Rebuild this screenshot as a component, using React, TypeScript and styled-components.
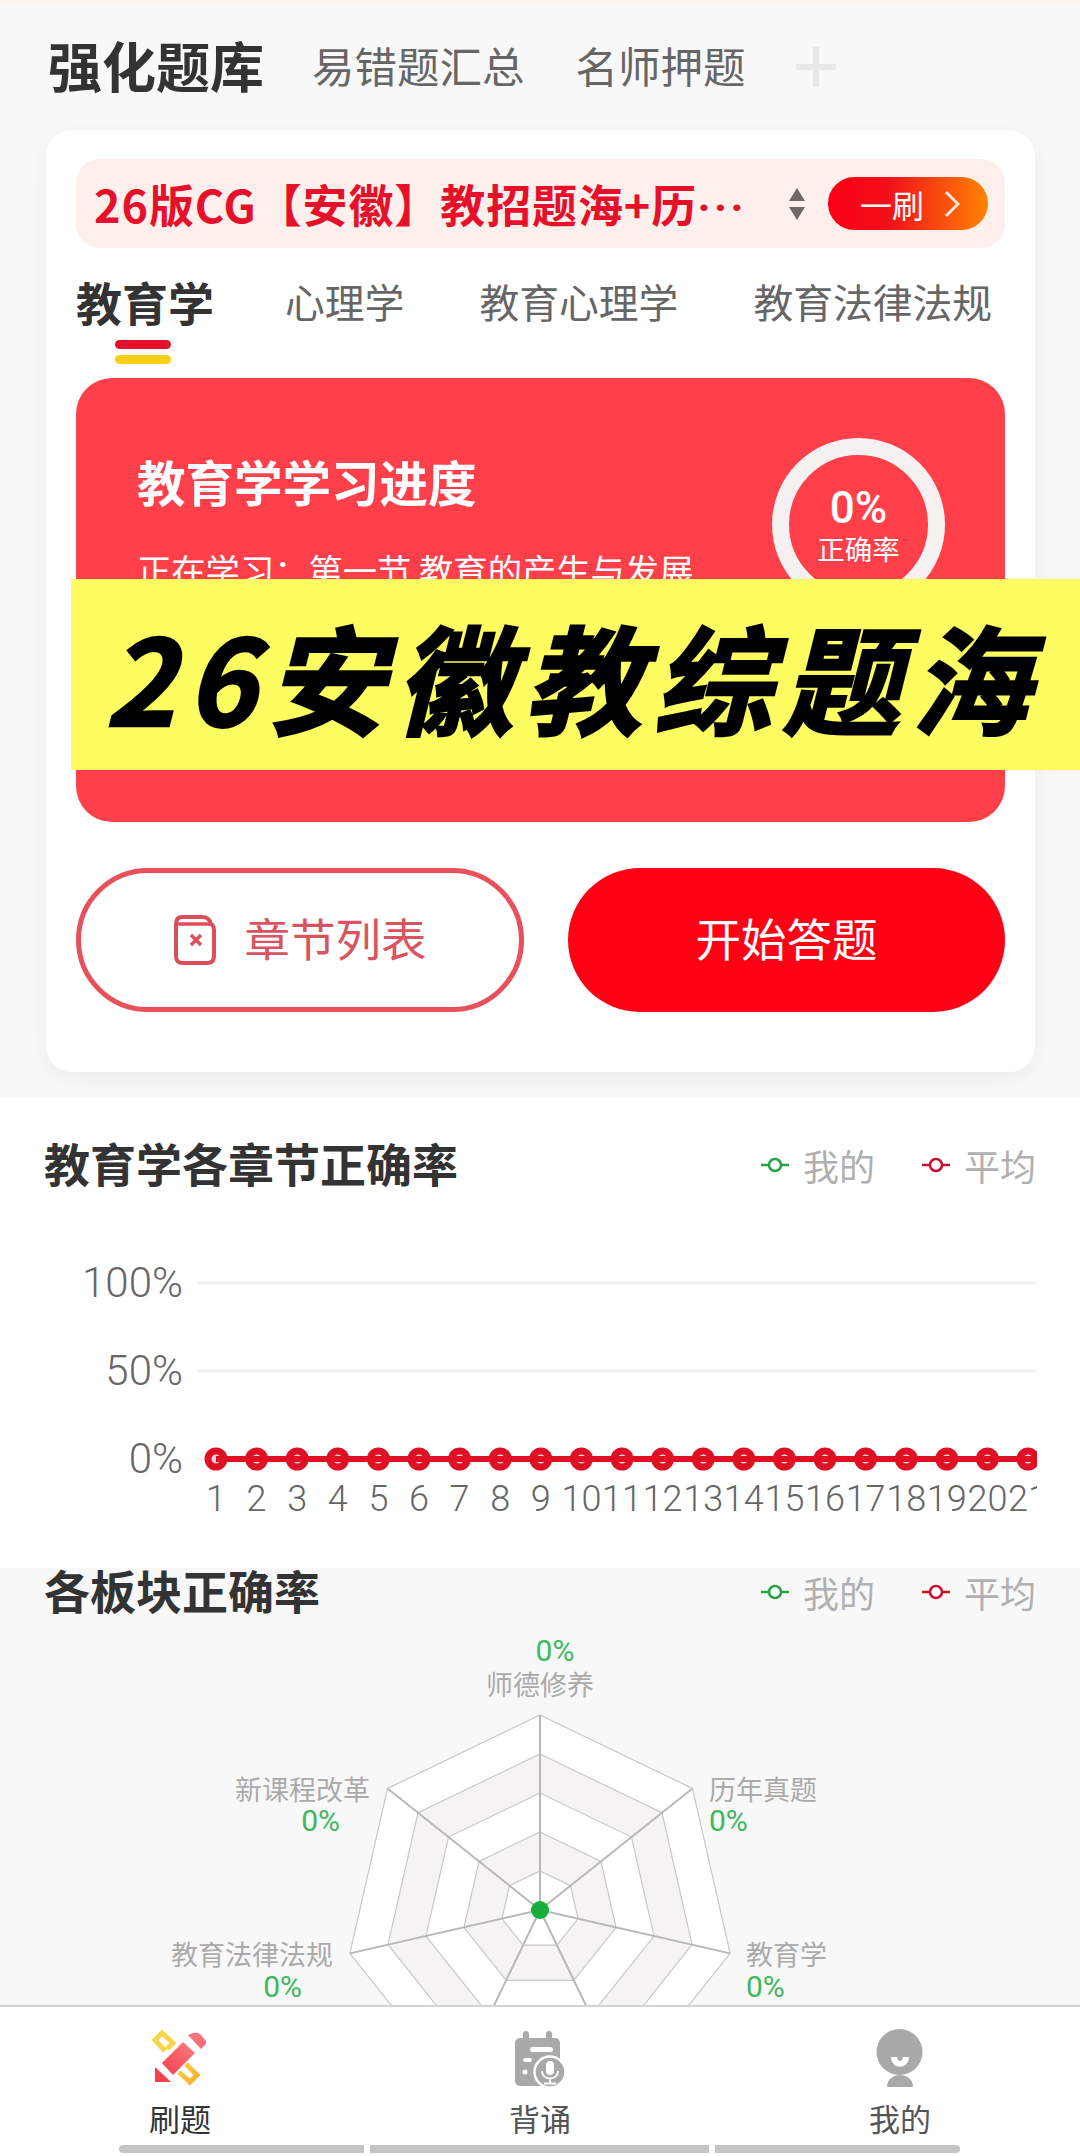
import React from 'react';
import styled, { createGlobalStyle } from 'styled-components';

const CJK = '"Noto Sans CJK SC", "Noto Sans", sans-serif';
const NUM = 'Roboto, "Noto Sans CJK SC", sans-serif';

const GlobalStyle = createGlobalStyle`
  html, body { margin: 0; padding: 0; background: #f8f8f8; }
  body { font-family: ${CJK}; }
  * { box-sizing: border-box; }
`;

const Page = styled.div`
  position: relative;
  width: 1080px;
  height: 2156px;
  display: flex;
  flex-direction: column;
  overflow: hidden;
  background: #f8f8f8;
`;
const Main = styled.div`
  flex: 1;
  min-height: 0;
  overflow: hidden;
`;
const TopSection = styled.section`
  height: 1098px;
  padding: 0 45px 0 46px;
  border-top: 3px solid #fff3ee;
`;
const Header = styled.div`
  height: 127px;
  display: flex;
  align-items: center;
  padding: 0 0 4px 2px;
  gap: 51px;
`;
const HeaderActive = styled.div`
  font-size: 54px;
  font-weight: 700;
  color: #333;
  margin-right: -3px;
`;
const HeaderItem = styled.div`
  font-size: 42.5px;
  color: #666;
`;
const PlusIcon = styled.svg`
  width: 42px;
  height: 42px;
  display: block;
  margin-left: -2px;
  margin-top: 4px;
`;
const Card = styled.div`
  height: 942px;
  background: #fff;
  border-radius: 26px;
  box-shadow: 0 6px 26px rgba(0, 0, 0, 0.05);
  padding: 29px 30px 0;
`;
const BookBar = styled.div`
  height: 89px;
  background: #fdf0ec;
  border-radius: 24px;
  display: flex;
  align-items: center;
  padding: 0 17px 0 18px;
`;
const BookName = styled.div`
  flex: 1;
  min-width: 0;
  overflow: hidden;
  font-size: 45px;
  font-weight: 700;
  letter-spacing: 0.9px;
  color: #e6102a;
  white-space: nowrap;
`;
const BookDots = styled.span`
  font-family: ${NUM};
  font-weight: 700;
  letter-spacing: 3px;
`;
const SortIcon = styled.svg`
  width: 20px;
  height: 34px;
  display: block;
  margin-right: 21px;
  flex: none;
`;
const RoundPill = styled.div`
  flex: none;
  width: 160px;
  height: 53px;
  border-radius: 27px;
  background: linear-gradient(90deg, #fb0016 0%, #f2101a 38%, #ff8400 100%);
  color: #fff;
  display: flex;
  align-items: center;
  justify-content: center;
  gap: 20px;
  font-size: 32px;
  padding-left: 4px;
`;
const PillArrow = styled.svg`
  width: 16px;
  height: 28px;
  display: block;
`;
const SubjectTabs = styled.div`
  display: flex;
  gap: 75px;
  height: 130px;
  padding-top: 22px;
  white-space: nowrap;
  align-items: flex-start;
`;
const SubjectTab = styled.div<{ $active?: boolean }>`
  position: relative;
  font-size: ${(p) => (p.$active ? '46px' : '39.8px')};
  font-weight: ${(p) => (p.$active ? 700 : 400)};
  color: ${(p) => (p.$active ? '#333' : '#666')};
  line-height: 62px;
  margin-right: ${(p) => (p.$active ? '-4px' : '0')};
  ${(p) =>
    p.$active &&
    `
    &::before, &::after {
      content: '';
      position: absolute;
      left: 39px;
      width: 56px;
      height: 9px;
      border-radius: 5px;
    }
    &::before { top: 70px; background: #e3122a; }
    &::after { top: 85px; background: #f7cf14; }
  `}
`;
const ProgressCard = styled.div`
  height: 444px;
  background: #ff404b;
  border-radius: 36px;
  display: flex;
  justify-content: space-between;
  padding: 60px 60px 0 61px;
  color: #fff;
  overflow: hidden;
`;
const ProgressTitle = styled.div`
  font-size: 48.5px;
  font-weight: 700;
  line-height: 70px;
  margin-top: 8px;
`;
const ProgressSub = styled.div`
  font-size: 34.3px;
  line-height: 50px;
  margin-top: 28px;
  white-space: nowrap;
`;
const Ring = styled.div`
  width: 173px;
  height: 173px;
  border: 17px solid #f4f1f0;
  border-radius: 50%;
  display: flex;
  flex-direction: column;
  align-items: center;
  justify-content: center;
`;
const RingValue = styled.div`
  font-family: ${NUM};
  font-size: 44px;
  font-weight: 500;
  line-height: 46px;
`;
const RingLabel = styled.div`
  font-size: 27.5px;
  line-height: 34px;
`;
const Actions = styled.div`
  display: flex;
  justify-content: space-between;
  margin-top: 46px;
`;
const OutlineButton = styled.div`
  width: 448px;
  height: 144px;
  border: 5px solid #e8505b;
  border-radius: 72px;
  display: flex;
  align-items: center;
  justify-content: center;
  gap: 27px;
  font-size: 45.5px;
  color: #d9545e;
  padding-bottom: 6px;
`;
const SolidButton = styled.div`
  width: 437px;
  height: 144px;
  background: #ff0015;
  border-radius: 72px;
  display: flex;
  align-items: center;
  justify-content: center;
  font-size: 45.5px;
  color: #fff;
  padding-bottom: 6px;
`;
const DocIcon = styled.svg`
  width: 44px;
  height: 52px;
  display: block;
  margin-top: 6px;
`;
const Banner = styled.div`
  position: absolute;
  left: 71px;
  right: 0;
  top: 579px;
  height: 191px;
  background: #fdfc60;
  display: flex;
  align-items: center;
  padding-left: 34px;
  font-size: 118px;
  font-weight: 700;
  font-style: italic;
  letter-spacing: 11px;
  color: #000;
  -webkit-text-stroke: 2.5px #000;
  white-space: nowrap;
`;
const ChartSection = styled.section<{ $tinted?: boolean }>`
  height: ${(p) => (p.$tinted ? '440px' : '470px')};
  background: ${(p) => (p.$tinted ? '#f8f8f8' : '#fff')};
  overflow: ${(p) => (p.$tinted ? 'visible' : 'hidden')};
`;
const SectionHead = styled.div<{ $height: number }>`
  height: ${(p) => p.$height}px;
  display: flex;
  align-items: center;
  justify-content: space-between;
  padding: 0 44px;
`;
const HeadGap = styled.div`
  height: 6px;
`;
const SectionTitle = styled.h2`
  margin: 0;
  font-size: 46px;
  font-weight: 700;
  color: #333;
`;
const Legend = styled.div`
  display: flex;
  gap: 47px;
  padding-top: 6px;
`;
const LegendItem = styled.div`
  display: flex;
  align-items: center;
  gap: 14px;
  font-size: 36px;
  color: #b0b0b0;
`;
const LegendMark = styled.svg`
  width: 28px;
  height: 20px;
  display: block;
`;
const LineChart = styled.svg`
  display: block;
  width: 1080px;
  height: 330px;
  font-family: ${NUM};
  font-weight: 300;
`;
const Radar = styled.svg`
  display: block;
  width: 1080px;
  height: 500px;
  margin-top: -1px;
  font-family: ${CJK};
`;
const TabBar = styled.nav`
  flex: none;
  height: 151px;
  background: #fff;
  border-top: 2px solid #d4d4d4;
  display: flex;
  flex-direction: column;
`;
const TabRow = styled.div`
  flex: 1;
  display: grid;
  grid-template-columns: repeat(3, 360px);
`;
const TabItem = styled.div<{ $active?: boolean }>`
  display: flex;
  flex-direction: column;
  align-items: center;
  padding-top: 21px;
  font-size: 31px;
  line-height: 44px;
  color: ${(p) => (p.$active ? '#333' : '#555')};
`;
const TabIcon = styled.svg`
  width: 60px;
  height: 60px;
  display: block;
  margin-bottom: 8px;
`;
const GestureRow = styled.div`
  display: flex;
  gap: 6px;
  padding: 0 120px 3px 119px;
`;
const GestureBar = styled.div<{ $grow: number; $pos: 'start' | 'mid' | 'end' }>`
  flex: ${(p) => p.$grow};
  height: 8px;
  background: #c4c4c4;
  border-radius: ${(p) => (p.$pos === 'start' ? '4px 0 0 4px' : p.$pos === 'end' ? '0 4px 4px 0' : '0')};
`;

const chartPoints = Array.from({ length: 21 }, (_, i) => i + 1);
const pointX = (i: number) => 216 + i * 40.6;

const radarCenter = { x: 540, y: 295 };
const radarVertex = (i: number, r: number) => {
  const a = (i * 2 * Math.PI) / 7;
  return [radarCenter.x + r * Math.sin(a), radarCenter.y - r * Math.cos(a)];
};
const ringPoints = (r: number) =>
  Array.from({ length: 7 }, (_, i) => radarVertex(i, r).join(',')).join(' ');

const LegendBlock = () => (
  <Legend>
    <LegendItem>
      <LegendMark viewBox="0 0 28 20">
        <path d="M0 10H28" stroke="#25a244" strokeWidth="2.5" />
        <circle cx="14" cy="10" r="6" fill="#fff" stroke="#25a244" strokeWidth="2.5" />
      </LegendMark>
      我的
    </LegendItem>
    <LegendItem>
      <LegendMark viewBox="0 0 28 20">
        <path d="M0 10H28" stroke="#c8102e" strokeWidth="2.5" />
        <circle cx="14" cy="10" r="6" fill="#fff" stroke="#c8102e" strokeWidth="2.5" />
      </LegendMark>
      平均
    </LegendItem>
  </Legend>
);

const App = () => {
  return (
    <Page>
      <GlobalStyle />
      <Main>
        <TopSection>
          <Header>
            <HeaderActive>强化题库</HeaderActive>
            <HeaderItem>易错题汇总</HeaderItem>
            <HeaderItem>名师押题</HeaderItem>
            <PlusIcon viewBox="0 0 42 42">
              <path d="M21 1V41M1 21H41" stroke="#e8e8e8" strokeWidth="6" />
            </PlusIcon>
          </Header>
          <Card>
            <BookBar>
              <BookName>
                26版CG【安徽】教招题海+历<BookDots>···</BookDots>
              </BookName>
              <SortIcon viewBox="0 0 20 34">
                <path d="M10 1L18 14H2Z M10 33L2 20H18Z" fill="#6e6a66" />
              </SortIcon>
              <RoundPill>
                一刷
                <PillArrow viewBox="0 0 16 28">
                  <path d="M2 2L14 14L2 26" fill="none" stroke="#ffe6d6" strokeWidth="3" />
                </PillArrow>
              </RoundPill>
            </BookBar>
            <SubjectTabs>
              <SubjectTab $active>教育学</SubjectTab>
              <SubjectTab>心理学</SubjectTab>
              <SubjectTab>教育心理学</SubjectTab>
              <SubjectTab>教育法律法规</SubjectTab>
            </SubjectTabs>
            <ProgressCard>
              <div>
                <ProgressTitle>教育学学习进度</ProgressTitle>
                <ProgressSub>正在学习：第一节 教育的产生与发展</ProgressSub>
              </div>
              <Ring>
                <RingValue>0%</RingValue>
                <RingLabel>正确率</RingLabel>
              </Ring>
            </ProgressCard>
            <Actions>
              <OutlineButton>
                <DocIcon viewBox="0 0 44 52">
                  <path
                    d="M3 10C3 5 5 3 9 3H29C34 3 37 6 38 10C40 11 41 13 41 16V42C41 47 38 49 34 49H10C5 49 3 47 3 42Z"
                    fill="none"
                    stroke="#dc4f5a"
                    strokeWidth="4"
                  />
                  <path d="M3 10H38" stroke="#dc4f5a" strokeWidth="3.5" />
                  <path d="M18 21L28 31M28 21L18 31" stroke="#dc4f5a" strokeWidth="3.5" />
                </DocIcon>
                章节列表
              </OutlineButton>
              <SolidButton>开始答题</SolidButton>
            </Actions>
          </Card>
        </TopSection>

        <ChartSection>
          <SectionHead $height={128}>
            <SectionTitle>教育学各章节正确率</SectionTitle>
            <LegendBlock />
          </SectionHead>
          <HeadGap />
          <LineChart viewBox="0 0 1080 330">
            <defs>
              <clipPath id="plot-clip">
                <rect x="190" y="0" width="847" height="330" />
              </clipPath>
            </defs>
            {[
              ['100%', 51],
              ['50%', 139],
              ['0%', 227],
            ].map(([label, y]) => (
              <g key={label}>
                <line x1="197" x2="1037" y1={y} y2={y} stroke="#f0f0f0" strokeWidth="3" />
                <text x="183" y={Number(y) + 14} textAnchor="end" fontSize="42" fill="#666">
                  {label}
                </text>
              </g>
            ))}
            <g clipPath="url(#plot-clip)">
              {chartPoints.map((n, i) => (
                <g key={n}>
                  <circle cx={pointX(i)} cy="227" r="8" fill="#f7d5d8" stroke="#e01024" strokeWidth="7" />
                  <text x={pointX(i)} y="279" textAnchor="middle" fontSize="36" fill="#666">
                    {n}
                  </text>
                </g>
              ))}
              <line x1="216" x2="1040" y1="227" y2="227" stroke="#e01024" strokeWidth="6" />
            </g>
          </LineChart>
        </ChartSection>

        <ChartSection $tinted>
          <SectionHead $height={42}>
            <SectionTitle>各板块正确率</SectionTitle>
            <LegendBlock />
          </SectionHead>
          <HeadGap />
          <Radar viewBox="0 0 1080 500">
            {[195, 156, 117, 78, 39].map((r, i) => (
              <polygon
                key={r}
                points={ringPoints(r)}
                fill={i % 2 === 0 ? '#fff' : '#f5f4f2'}
                stroke="#c8c8c8"
                strokeWidth="1.2"
              />
            ))}
            {Array.from({ length: 7 }, (_, i) => {
              const [x, y] = radarVertex(i, 195);
              return (
                <line key={i} x1={radarCenter.x} y1={radarCenter.y} x2={x} y2={y} stroke="#b8b8b8" strokeWidth="2" />
              );
            })}
            <circle cx={radarCenter.x} cy={radarCenter.y} r="9" fill="#16ae3c" />
            <text x="555" y="46" textAnchor="middle" fontSize="30" fill="#3db85c" fontFamily={NUM}>0%</text>
            <text x="540" y="80" textAnchor="middle" fontSize="27" fill="#aaa">师德修养</text>
            <text x="709" y="185" fontSize="27" fill="#aaa">历年真题</text>
            <text x="709" y="216" fontSize="30" fill="#3db85c" fontFamily={NUM}>0%</text>
            <text x="370" y="185" textAnchor="end" fontSize="27" fill="#aaa">新课程改革</text>
            <text x="340" y="216" textAnchor="end" fontSize="30" fill="#3db85c" fontFamily={NUM}>0%</text>
            <text x="746" y="350" fontSize="27" fill="#aaa">教育学</text>
            <text x="746" y="382" fontSize="30" fill="#3db85c" fontFamily={NUM}>0%</text>
            <text x="333" y="350" textAnchor="end" fontSize="27" fill="#aaa">教育法律法规</text>
            <text x="302" y="382" textAnchor="end" fontSize="30" fill="#3db85c" fontFamily={NUM}>0%</text>
          </Radar>
        </ChartSection>
      </Main>

      <TabBar>
        <TabRow>
          <TabItem $active>
            <TabIcon viewBox="0 0 60 60">
              <defs>
                <linearGradient id="pencil-red" x1="0" y1="1" x2="1" y2="0">
                  <stop offset="0" stopColor="#f5404c" />
                  <stop offset="1" stopColor="#fb7d86" />
                </linearGradient>
                <linearGradient id="pencil-yellow" x1="0" y1="0" x2="1" y2="1">
                  <stop offset="0" stopColor="#f9d648" />
                  <stop offset="1" stopColor="#f6ad2c" />
                </linearGradient>
              </defs>
              <path d="M5 39L21 54H5Z" fill="#f5404c" />
              <path d="M33 14L45 25L23 47L12 35Z" fill="url(#pencil-red)" />
              <path d="M38 7L43 5Q47 4 50 6L56 13Q57 15 55 17L51 21Z" fill="#f4737d" />
              <path d="M15 23L5 12L12 5L23 15L17 21" fill="none" stroke="#f9d648" strokeWidth="5" />
              <path d="M36 36L47 47L40 54L29 44" fill="none" stroke="url(#pencil-yellow)" strokeWidth="5" />
            </TabIcon>
            刷题
          </TabItem>
          <TabItem>
            <TabIcon viewBox="0 0 60 60">
              <rect x="5" y="10" width="45" height="48" rx="5" fill="#a9a9a9" />
              <rect x="13" y="3" width="6" height="14" rx="3" fill="#a9a9a9" />
              <rect x="36" y="3" width="6" height="14" rx="3" fill="#a9a9a9" />
              <rect x="20" y="19" width="23" height="5" rx="2.5" fill="#fff" />
              <rect x="13" y="30" width="9" height="4" rx="2" fill="#fff" />
              <circle cx="15" cy="44" r="2.5" fill="#fff" />
              <circle cx="40" cy="44" r="15.5" fill="#a9a9a9" stroke="#fff" strokeWidth="2.5" />
              <rect x="36" y="33" width="8" height="14" rx="4" fill="#fff" />
              <path d="M32 43C32 53 48 53 48 43M40 50V55M34 55.5H46" fill="none" stroke="#fff" strokeWidth="1.8" />
            </TabIcon>
            背诵
          </TabItem>
          <TabItem>
            <TabIcon viewBox="0 0 60 60">
              <circle cx="29.5" cy="24" r="23" fill="#a9a9a9" />
              <path d="M24 29C24 38 36 38 36 29" fill="none" stroke="#fff" strokeWidth="6" />
              <path d="M17 59C17 43 43 43 43 59Z" fill="#a9a9a9" />
            </TabIcon>
            我的
          </TabItem>
        </TabRow>
        <GestureRow>
          <GestureBar $grow={245} $pos="start" />
          <GestureBar $grow={339} $pos="mid" />
          <GestureBar $grow={245} $pos="end" />
        </GestureRow>
      </TabBar>

      <Banner>26安徽教综题海</Banner>
    </Page>
  );
};

export default App;
